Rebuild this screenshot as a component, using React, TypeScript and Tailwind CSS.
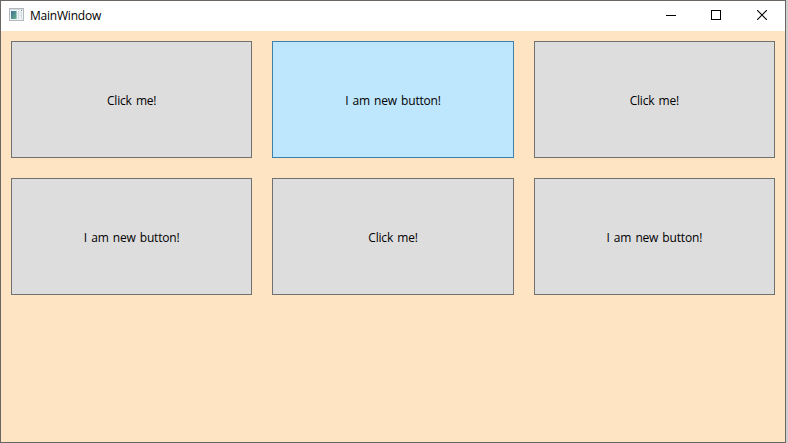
import React from "react";

const labels: string[] = [
  "Click me!",
  "I am new button!",
  "Click me!",
  "I am new button!",
  "Click me!",
  "I am new button!",
];

function AppIcon() {
  return (
    <svg className="ml-2 mt-[7px] shrink-0" width="16" height="14" viewBox="0 0 16 14" shapeRendering="crispEdges">
      <defs>
        <linearGradient id="pane" x1="0" y1="0" x2="1" y2="1">
          <stop offset="0" stopColor="#3f719b" />
          <stop offset="1" stopColor="#66ad85" />
        </linearGradient>
      </defs>
      <rect x="0.5" y="0.5" width="14" height="12" fill="#f1f4f5" stroke="#b4b8bd" />
      <path d="M1 1.5h13" stroke="#d6dbdf" />
      <rect x="2" y="3" width="5" height="8" fill="url(#pane)" />
      <rect x="7" y="3" width="1" height="8" fill="#9cc4c2" />
      <path d="M9.5 3v8M12.5 4v7" stroke="#cfdce0" />
      <path d="M10 4.5h2M10 7.5h2" stroke="#e0e5e8" />
      <path d="M12 2.5h1" stroke="#7d929d" />
    </svg>
  );
}

function TitleBar() {
  return (
    <header className="flex h-[30px] shrink-0 bg-white">
      <AppIcon />
      <span className="ml-[5px] flex-1 text-[12px] leading-[29px] tracking-[-0.22px] text-black">MainWindow</span>
      <div className="flex">
        <button className="flex w-[45px] justify-center pt-[9px]" aria-label="Minimize">
          <svg width="10" height="10" viewBox="0 0 10 10" shapeRendering="crispEdges">
            <path d="M0 5.5h10" stroke="#000" />
          </svg>
        </button>
        <button className="flex w-[46px] justify-center pt-[9px]" aria-label="Maximize">
          <svg width="10" height="10" viewBox="0 0 10 10" shapeRendering="crispEdges">
            <rect x="0.5" y="0.5" width="9" height="9" fill="none" stroke="#000" />
          </svg>
        </button>
        <button className="flex w-[46px] justify-center pt-[9px]" aria-label="Close">
          <svg width="10" height="10" viewBox="0 0 10 10">
            <path d="M0 0l10 10M10 0L0 10" stroke="#000" strokeWidth="1.1" />
          </svg>
        </button>
      </div>
    </header>
  );
}

export default function App() {
  return (
    <div className="h-[443px] w-[788px] overflow-hidden bg-[#cfcfcf] font-['Open_Sans','Noto_Sans',sans-serif]">
      <div className="flex h-[443px] w-[786px] flex-col border border-[#6b6661] bg-[#ffe4c4]">
        <TitleBar />
        <main className="grid grid-cols-3 gap-5 p-[10px]">
          {labels.map((label, i) => (
            <button
              key={i}
              className={`h-[117px] border pt-[3px] text-[12px] tracking-[-0.18px] [word-spacing:1.2px] text-black ${
                i === 1 ? "border-[#3c7fb1] bg-[#bee6fd]" : "border-[#707070] bg-[#dddddd]"
              }`}
            >
              {label}
            </button>
          ))}
        </main>
      </div>
    </div>
  );
}
